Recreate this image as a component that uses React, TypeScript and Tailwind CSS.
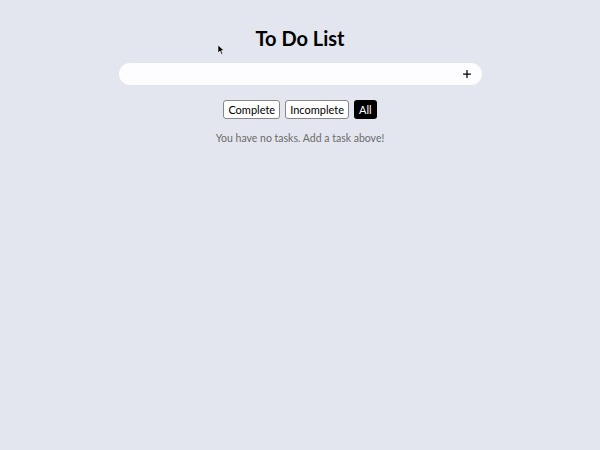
import { Plus } from 'lucide-react';

export default function App() {
    return (
        <div className="relative min-h-[450px] w-full bg-[#e3e6ee] font-['Lato',sans-serif] text-black">
            <div className="mx-auto flex w-[363px] flex-col items-center pt-[26px]">
                <h1 className="text-[20px] font-bold leading-[24px]">To Do List</h1>
                <div className="mt-[13px] flex h-[22px] w-full items-center justify-end rounded-full bg-[#fdfcff] pr-[9px]">
                    <Plus className="h-[12px] w-[12px]" strokeWidth={2.5} />
                </div>
                <div className="mt-[15px] flex items-center gap-[5px] text-[11px] leading-none">
                    <button className="h-[19px] rounded-[3px] border border-[#888] bg-white px-[4px]">Complete</button>
                    <button className="h-[19px] rounded-[3px] border border-[#888] bg-white px-[4px]">Incomplete</button>
                    <button className="h-[19px] rounded-[3px] bg-black px-[5px] text-white">All</button>
                </div>
                <p className="mt-[12px] text-[10.5px] text-[#6b6b6b]">You have no tasks. Add a task above!</p>
            </div>
            {/* mouse pointer */}
            <svg className="absolute left-[218px] top-[45px]" width="7" height="10" viewBox="0 0 7 10">
                <path d="M0 0 L0 8 L2 6 L3.5 9.5 L4.8 9 L3.4 5.6 L6 5.6 Z" fill="black" stroke="white" strokeWidth="0.6" />
            </svg>
        </div>
    );
}
